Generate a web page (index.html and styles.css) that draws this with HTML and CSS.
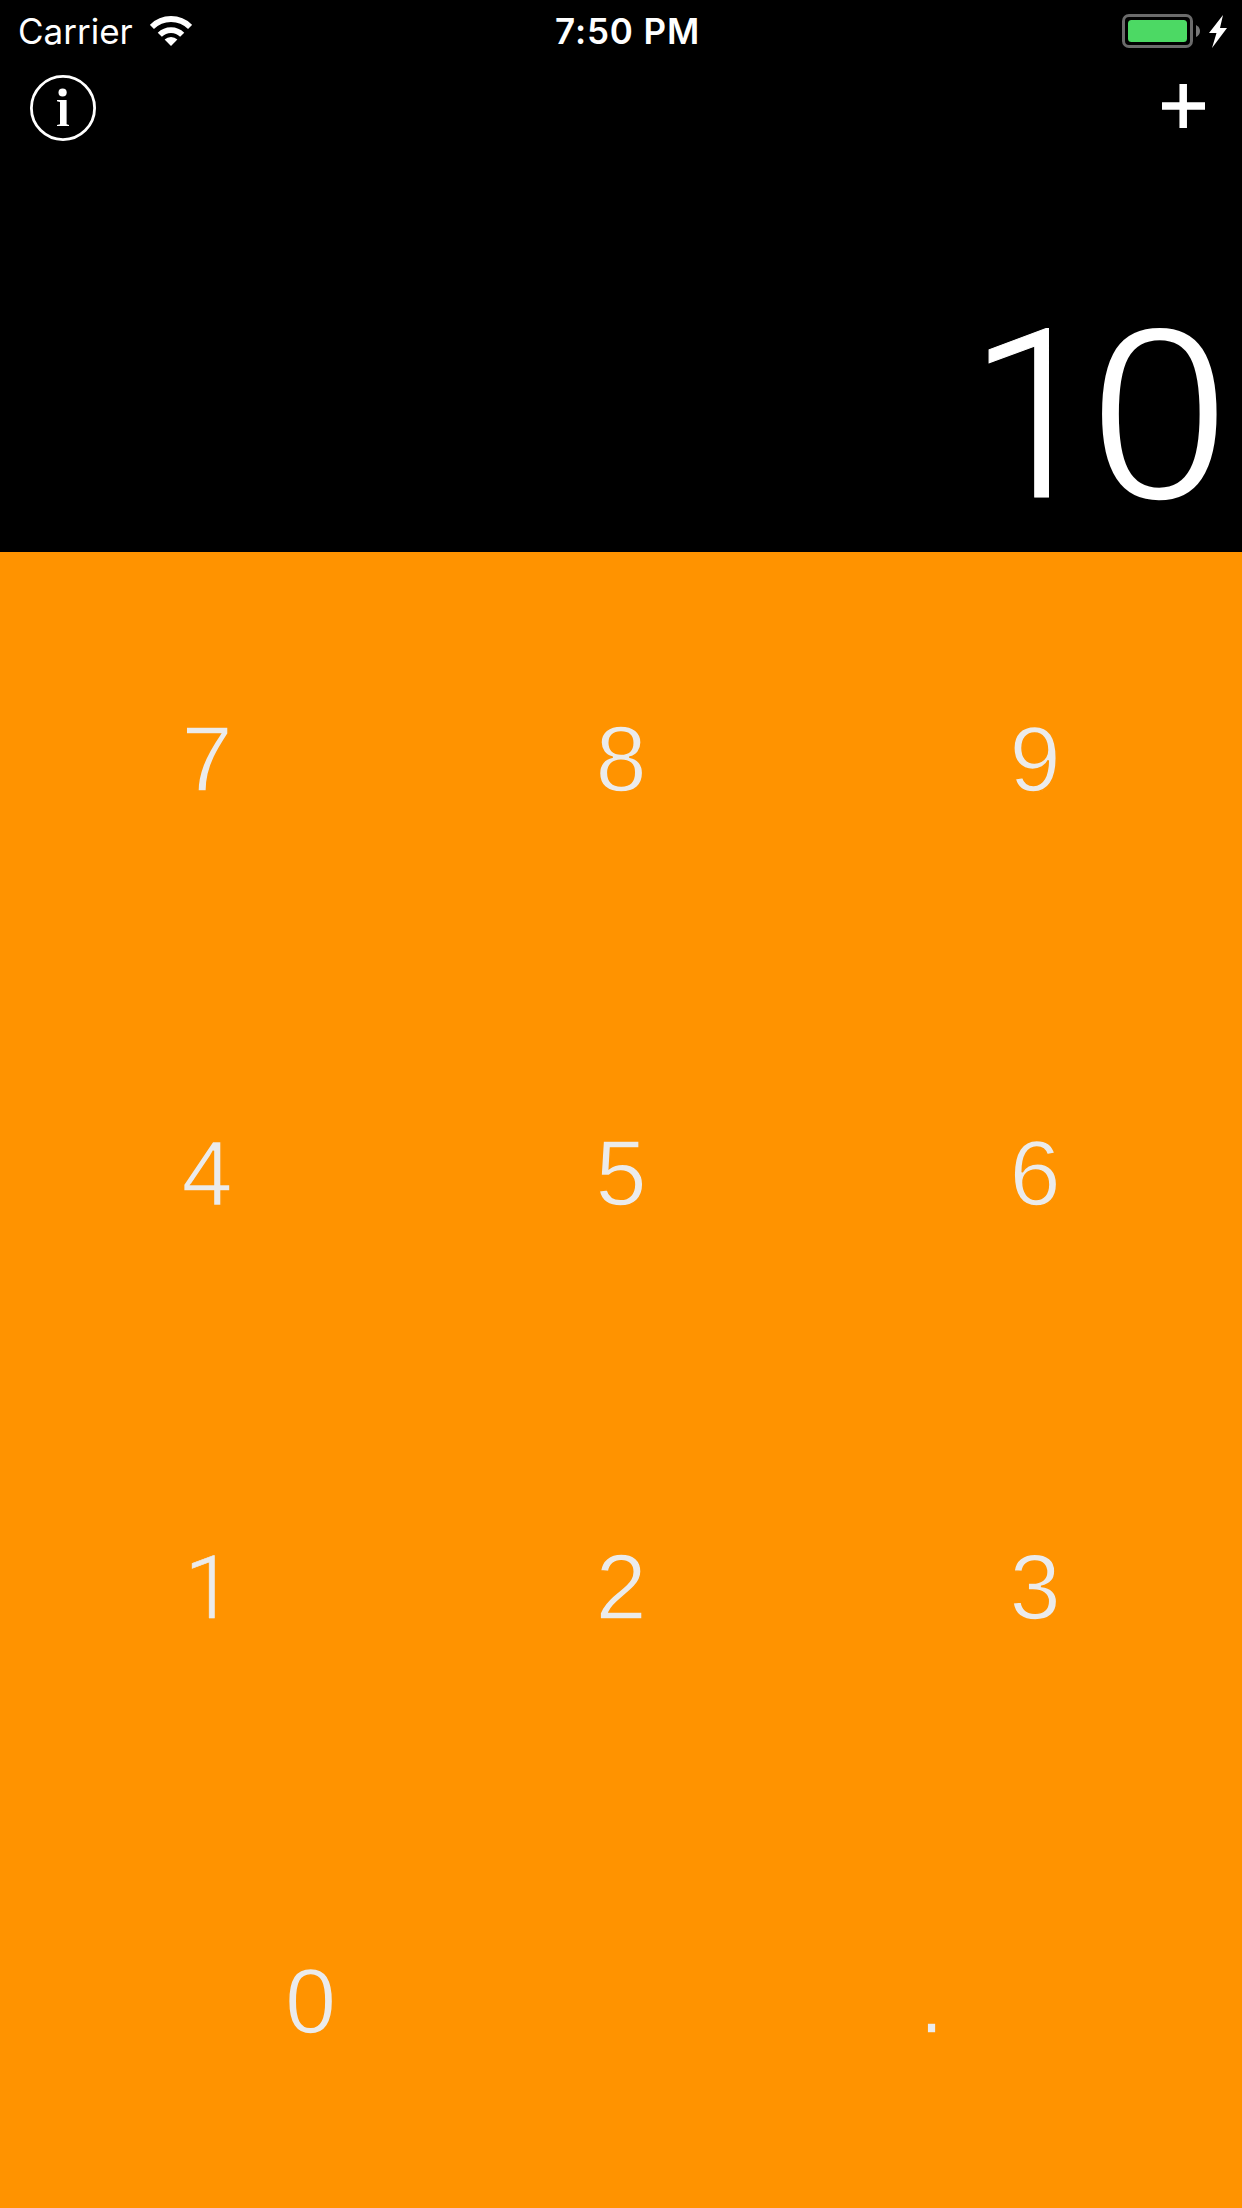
FILE: index.html
```html
<!DOCTYPE html>
<html lang="en">
<head>
<meta charset="utf-8">
<title>Calculator</title>
<link rel="stylesheet" href="styles.css">
</head>
<body>
<main class="app">
  <header class="top">
    <div class="status">
      <div class="status-left">
        <span class="carrier">Carrier</span>
        <svg class="wifi" width="42" height="30" viewBox="0 0 42 30"><path d="M21 30l6.400-6.400a9 9 0 0 0-12.800 0z" fill="#fff"/><path d="M9.800 18.800a15.800 15.800 0 0 1 22.400 0M1.900 10.900a27 27 0 0 1 38.200 0" fill="none" stroke="#fff" stroke-width="5.800"/></svg>
      </div>
      <span class="time">7:50 PM</span>
      <svg class="battery" width="106" height="34" viewBox="0 0 106 34"><rect x="1.500" y="1.500" width="68" height="31" rx="5.500" fill="none" stroke="#6b6b6b" stroke-width="3"/><rect x="6" y="6" width="59" height="22" rx="3.500" fill="#4cd964"/><path d="M74 11q4 2 4 6t-4 6z" fill="#777"/><path d="M101 1L87 19h7.500L90 34l15-20h-7z" fill="#fff"/></svg>
    </div>
    <nav class="toolbar">
      <svg class="info" width="66" height="66" viewBox="0 0 66 66"><circle cx="33" cy="33" r="31.600" fill="none" stroke="#fff" stroke-width="2.800"/><circle cx="32.600" cy="17.500" r="4.100" fill="#fff"/><path d="M27 25h9.600v24.300l2.400.6v1.200H27v-1.200l3-.6V27l-3-.8z" fill="#fff"/></svg>
      <svg class="add" width="43" height="44" viewBox="0 0 43 44"><path d="M21.200 0v44M0 22h43" stroke="#fff" stroke-width="7.500"/></svg>
    </nav>
    <div class="display"><span class="display-one">1</span>0</div>
  </header>
  <section class="keys">
    <div class="row"><span class="key">7</span><span class="key">8</span><span class="key">9</span></div>
    <div class="row"><span class="key">4</span><span class="key">5</span><span class="key">6</span></div>
    <div class="row"><span class="key key-one">1</span><span class="key">2</span><span class="key">3</span></div>
    <div class="row"><span class="key">0</span><span class="key">.</span></div>
  </section>
</main>
</body>
</html>
```
FILE: styles.css
```css
body {
  margin: 0;
}

.app {
  width: 1242px;
  height: 2208px;
  display: flex;
  flex-direction: column;
  font-family: "Liberation Sans", sans-serif;
}

.top {
  height: 552px;
  box-sizing: border-box;
  padding-bottom: 4px;
  background: #000;
  color: #fff;
  display: flex;
  flex-direction: column;
}

.status {
  height: 60px;
  box-sizing: border-box;
  padding: 0 14px 0 18px;
  display: grid;
  grid-template-columns: 537px 1fr auto;
  align-items: center;
  font-family: Inter, sans-serif;
  font-size: 35px;
  line-height: 62px;
}

.status-left {
  display: flex;
  align-items: center;
  gap: 17px;
}

.time {
  font-weight: 600;
  letter-spacing: 0.9px;
}

.toolbar {
  display: flex;
  justify-content: space-between;
  align-items: center;
  padding: 15px 37px 0 30px;
}

.add {
  margin-top: -4px;
}

/* A stroke in the background colour slims the digits to a light weight. */
.display {
  margin-top: auto;
  padding-right: 13px;
  text-align: right;
  font-size: 251px;
  line-height: 268px;
  -webkit-text-stroke: 5.500px #000;
}

.display-one {
  margin-right: -10px;
  font-family: Roboto, sans-serif;
  font-weight: 300;
  font-size: 236px;
  line-height: 0;
  vertical-align: 4px;
  -webkit-text-stroke: 1px #fff;
}

.keys {
  flex: 1;
  background: #ff9300;
  display: flex;
  flex-direction: column;
}

.row {
  flex: 1;
  display: flex;
}

.key {
  flex: 1;
  display: flex;
  align-items: center;
  justify-content: center;
  font-size: 92px;
  color: #ebebeb;
  -webkit-text-stroke: 1.500px #ff9300;
}

.key-one {
  padding-left: 2px;
  margin-right: -2px;
  font-family: Roboto, sans-serif;
  font-weight: 300;
  font-size: 88px;
  -webkit-text-stroke: 0.6px #ebebeb;
}
```
